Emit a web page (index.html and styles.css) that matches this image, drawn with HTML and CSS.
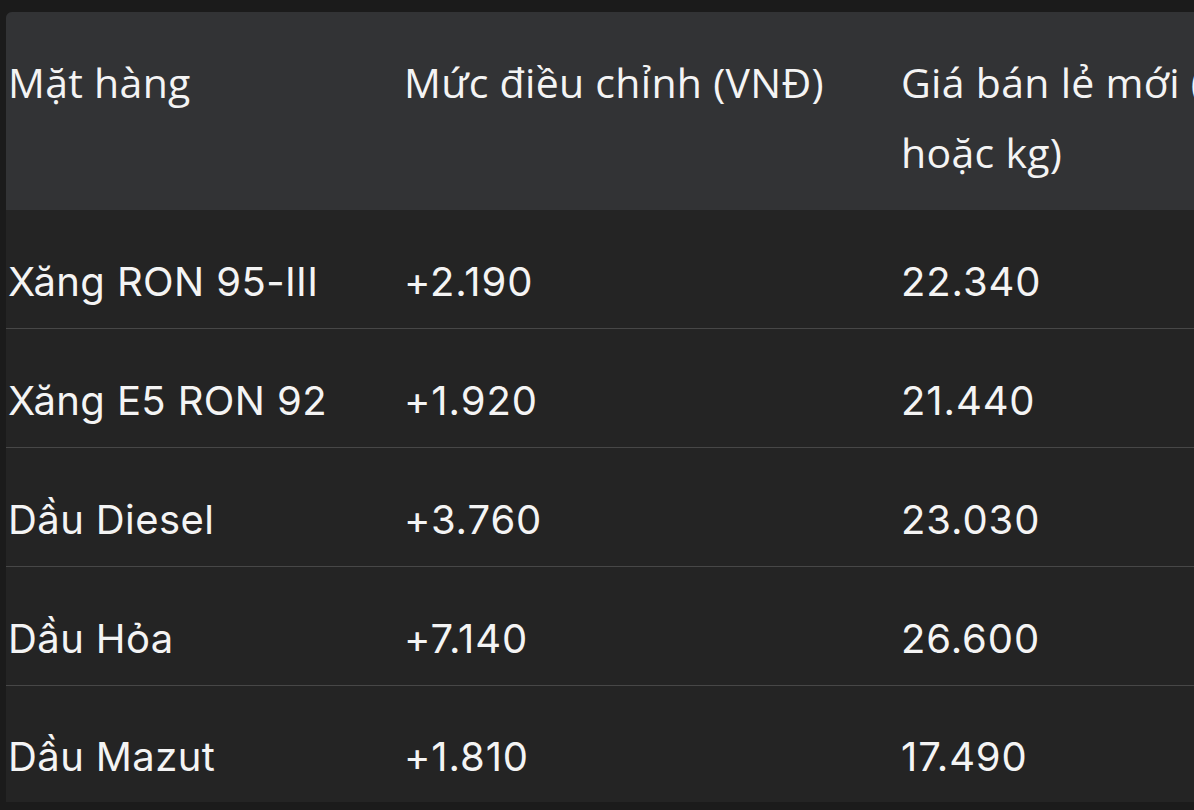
FILE: index.html
```html
<!DOCTYPE html>
<html lang="vi">
<head>
<meta charset="utf-8">
<link rel="stylesheet" href="styles.css">
</head>
<body>
<div class="frame">
  <div class="table">
    <div class="row head">
      <div class="cell c1">Mặt hàng</div>
      <div class="cell c2">Mức điều chỉnh (VNĐ)</div>
      <div class="cell c3">Giá bán lẻ mới (VNĐ/lít hoặc kg)</div>
    </div>
    <div class="row">
      <div class="cell c1">Xăng RON 95-III</div>
      <div class="cell c2 num">+2.190</div>
      <div class="cell c3 num">22.340</div>
    </div>
    <div class="row">
      <div class="cell c1">Xăng E5 RON 92</div>
      <div class="cell c2 num">+1.920</div>
      <div class="cell c3 num">21.440</div>
    </div>
    <div class="row">
      <div class="cell c1">Dầu Diesel</div>
      <div class="cell c2 num">+3.760</div>
      <div class="cell c3 num">23.030</div>
    </div>
    <div class="row">
      <div class="cell c1">Dầu Hỏa</div>
      <div class="cell c2 num">+7.140</div>
      <div class="cell c3 num">26.600</div>
    </div>
    <div class="row last">
      <div class="cell c1">Dầu Mazut</div>
      <div class="cell c2 num">+1.810</div>
      <div class="cell c3 num">17.490</div>
    </div>
  </div>
</div>
</body>
</html>
```
FILE: styles.css
```css
html, body {
  margin: 0;
  padding: 0;
  background: #1b1b1b;
  overflow: hidden;
}
.frame {
  width: 1194px;
  height: 810px;
  padding: 12px 0 0 6px;
  box-sizing: border-box;
  overflow: hidden;
}
.table {
  width: 1600px;
  background: #242424;
  border-top-left-radius: 6px;
  overflow: hidden;
  color: #f4f4f4;
  font-family: Inter, "Noto Sans", sans-serif;
  font-size: 40px;
  letter-spacing: 0.4px;
}
.row {
  display: flex;
  height: 118px;
  align-items: center;
  border-bottom: 1px solid #474747;
}
.row.last {
  border-bottom: none;
  height: 116px;
}
.row.head {
  background: #323335;
  height: 198px;
  align-items: flex-start;
  border-bottom: none;
  font-family: "Open Sans", sans-serif;
  font-weight: 500;
  font-size: 41px;
  letter-spacing: 0.3px;
}
.head .cell {
  padding-top: 35px;
  line-height: 70px;
}
.cell {
  box-sizing: border-box;
  padding-left: 2px;
  padding-top: 24px;
}
.num {
  letter-spacing: 0.9px;
}
.c1 { width: 396px; }
.c2 { width: 497px; }
.c3 { width: 480px; }
```
